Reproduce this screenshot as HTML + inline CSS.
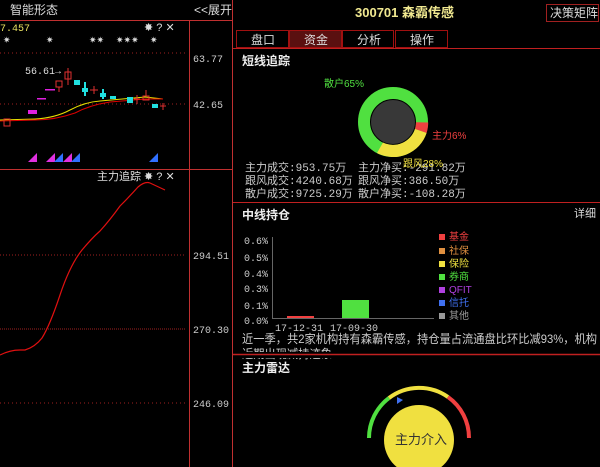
<!DOCTYPE html>
<html><head><meta charset="utf-8"><style>
body{margin:0;background:#000;width:600px;height:467px;overflow:hidden}
svg{display:block;font-family:"Liberation Sans","Noto Sans CJK SC",sans-serif}
</style></head><body>
<svg width="600" height="467" viewBox="0 0 600 467">
<rect width="600" height="467" fill="#000"/>
<text x="10" y="14" fill="#ddd" font-size="12">智能形态</text>
<text x="194" y="14" fill="#ddd" font-size="12">&lt;&lt;展开</text>
<line x1="0" y1="20.5" x2="233" y2="20.5" stroke="#c03030"/>
<line x1="232.5" y1="0" x2="232.5" y2="467" stroke="#c03030"/>
<line x1="189.5" y1="20" x2="189.5" y2="467" stroke="#c03030"/>
<line x1="0" y1="169.5" x2="233" y2="169.5" stroke="#c03030"/>
<text x="0" y="31" fill="#e8e060" font-size="10" font-family="Liberation Mono,monospace">7.457</text>
<text x="144" y="31" fill="#ddd" font-size="11">✸ ? ✕</text>
<g fill="#ddd" font-size="9"><text x="3" y="43">✷</text><text x="46" y="43">✷</text><text x="89" y="43">✷✷</text><text x="116" y="43">✷✷✷</text><text x="150" y="43">✷</text></g>
<line x1="0" y1="53" x2="185" y2="53" stroke="#a02020" stroke-dasharray="1 3"/>
<line x1="0" y1="104" x2="185" y2="104" stroke="#a02020" stroke-dasharray="1 3"/>
<text x="193" y="62" fill="#ccc" font-size="10" font-family="Liberation Mono,monospace">63.77</text>
<text x="193" y="108" fill="#ccc" font-size="10" font-family="Liberation Mono,monospace">42.65</text>
<text x="25" y="74" fill="#ddd" font-size="10" font-family="Liberation Mono,monospace">56.61→</text>
<path d="M0 120 L35 119 Q55 118 70 110 Q85 102 100 101 L145 97 L163 99" stroke="#e8e000" fill="none"/>
<path d="M0 121 L35 120 Q55 120 75 113 Q90 105 110 102 L145 99 L163 99" stroke="#d00" fill="none"/>
<g fill="none" stroke="#e03030"><rect x="4" y="119" width="6" height="7"/><rect x="56" y="81" width="6" height="6"/><rect x="65" y="72" width="6" height="7"/><line x1="68" y1="68" x2="68" y2="85"/><line x1="59" y1="87" x2="59" y2="92"/><line x1="90" y1="90" x2="98" y2="90"/><line x1="94" y1="86" x2="94" y2="94"/><line x1="134" y1="99" x2="140" y2="99"/><line x1="137" y1="95" x2="137" y2="104"/><rect x="143" y="96" width="6" height="4"/><line x1="146" y1="90" x2="146" y2="96"/><line x1="160" y1="106" x2="166" y2="106"/><line x1="163" y1="103" x2="163" y2="110"/></g>
<g fill="#20e0e0"><rect x="74" y="80" width="6" height="5"/><rect x="82" y="88" width="6" height="4"/><rect x="100" y="93" width="6" height="4"/><rect x="110" y="96" width="6" height="3"/><rect x="127" y="97" width="6" height="6"/><rect x="152" y="104" width="6" height="4"/><rect x="84" y="82" width="2" height="14"/><rect x="102" y="89" width="2" height="10"/></g>
<g fill="#e020e0"><rect x="28" y="110" width="9" height="4"/><rect x="45" y="89" width="10" height="1.5"/><rect x="37" y="98" width="9" height="1.5"/></g>
<g font-size="9"><text x="28" y="161" fill="#e030e0">◢</text><text x="46" y="161" fill="#e030e0">◢</text><text x="54" y="161" fill="#3070ff">◢</text><text x="63" y="161" fill="#e030e0">◢</text><text x="71" y="161" fill="#3070ff">◢</text><text x="149" y="161" fill="#3070ff">◢</text></g>
<text x="97" y="180" fill="#ddd" font-size="11">主力追踪</text>
<text x="144" y="180" fill="#ddd" font-size="11">✸ ? ✕</text>
<line x1="0" y1="255" x2="185" y2="255" stroke="#a02020" stroke-dasharray="1 2"/>
<line x1="0" y1="329" x2="185" y2="329" stroke="#a02020" stroke-dasharray="1 1"/>
<line x1="0" y1="403" x2="185" y2="403" stroke="#a02020" stroke-dasharray="1 3"/>
<text x="193" y="259" fill="#ccc" font-size="10" font-family="Liberation Mono,monospace">294.51</text>
<text x="193" y="333" fill="#ccc" font-size="10" font-family="Liberation Mono,monospace">270.30</text>
<text x="193" y="407" fill="#ccc" font-size="10" font-family="Liberation Mono,monospace">246.09</text>
<path d="M0 355 Q10 350 20 350 L25 350 Q35 347 42 338 Q50 325 60 295 Q70 265 82 250 Q92 238 100 231 Q110 220 120 206 Q130 196 138 187 Q145 181 150 183 L165 190" stroke="#e01010" fill="none" stroke-width="1.2"/>
<text x="355" y="17" fill="#f0e890" font-size="13" font-weight="bold">300701 森霸传感</text>
<rect x="546.5" y="4.5" width="52" height="17" fill="none" stroke="#a02020"/>
<text x="550" y="17" fill="#ddd" font-size="12">决策矩阵</text>
<g stroke="#a01010" fill="none"><rect x="236.5" y="30.5" width="52" height="17"/><rect x="289.5" y="30.5" width="52" height="17" fill="#5a1010"/><rect x="342.5" y="30.5" width="51" height="17"/><rect x="395.5" y="30.5" width="52" height="17"/></g>
<g fill="#ddd" font-size="12"><text x="251" y="44">盘口</text><text x="304" y="44">资金</text><text x="357" y="44">分析</text><text x="410" y="44">操作</text></g>
<line x1="233" y1="48.5" x2="600" y2="48.5" stroke="#c02020"/>
<text x="242" y="65" fill="#eee" font-size="12" font-weight="bold">短线追踪</text>
<text x="324" y="87" fill="#50e040" font-size="10">散户65%</text>
<circle cx="393" cy="122" r="29" fill="none" stroke="#50e040" stroke-width="12"/>
<path d="M428.2 122.5 A35 35 0 0 1 426.6 133 L415 129 A23 23 0 0 0 416 122.3Z" fill="#f04040"/>
<path d="M426.6 133 A35 35 0 0 1 377 153 L383 142.5 A23 23 0 0 0 415 129Z" fill="#f0e040"/>
<circle cx="393" cy="122" r="22" fill="#383838"/>
<text x="432" y="139" fill="#f04040" font-size="10">主力6%</text>
<g fill="#ccc" font-size="11" font-family="Liberation Mono,'Noto Sans CJK SC',monospace"><text x="245" y="171">主力成交:953.75万</text><text x="358" y="171">主力净买:-291.82万</text><text x="245" y="184">跟风成交:4240.68万</text><text x="358" y="184">跟风净买:386.50万</text><text x="245" y="197">散户成交:9725.29万</text><text x="358" y="197">散户净买:-108.28万</text></g>
<text x="403" y="167" fill="#f0e040" font-size="10">跟风28%</text>
<line x1="233" y1="202.5" x2="600" y2="202.5" stroke="#c02020"/>
<text x="242" y="219" fill="#eee" font-size="12" font-weight="bold">中线持仓</text>
<text x="574" y="217" fill="#ddd" font-size="11">详细</text>
<g fill="#ccc" font-size="10" font-family="Liberation Mono,monospace"><text x="244" y="244">0.6%</text><text x="244" y="261">0.5%</text><text x="244" y="277">0.4%</text><text x="244" y="292">0.3%</text><text x="244" y="309">0.1%</text><text x="244" y="324">0.0%</text><text x="275" y="331">17-12-31</text><text x="330" y="331">17-09-30</text></g>
<line x1="272.5" y1="237" x2="272.5" y2="319" stroke="#666"/>
<line x1="272" y1="318.5" x2="434" y2="318.5" stroke="#666"/>
<rect x="287" y="316" width="27" height="2" fill="#f04040"/>
<rect x="342" y="300" width="27" height="18" fill="#50e040"/>
<g font-size="10"><rect x="439" y="234" width="6" height="6" fill="#f04040"/><text x="449" y="240" fill="#f04040">基金</text>
<rect x="439" y="248" width="6" height="6" fill="#e09040"/><text x="449" y="254" fill="#e09040">社保</text>
<rect x="439" y="261" width="6" height="6" fill="#f0e040"/><text x="449" y="267" fill="#f0e040">保险</text>
<rect x="439" y="274" width="6" height="6" fill="#50e040"/><text x="449" y="280" fill="#50e040">券商</text>
<rect x="439" y="287" width="6" height="6" fill="#b040e0"/><text x="449" y="293" fill="#b040e0">QFIT</text>
<rect x="439" y="300" width="6" height="6" fill="#4070f0"/><text x="449" y="306" fill="#4070f0">信托</text>
<rect x="439" y="313" width="6" height="6" fill="#999"/><text x="449" y="319" fill="#999">其他</text></g>
<text x="242" y="343" fill="#ccc" font-size="12" textLength="355" lengthAdjust="spacingAndGlyphs">近一季，共2家机构持有森霸传感，持仓量占流通盘比环比减93%，机构</text>
<text x="242" y="358" fill="#ccc" font-size="12" textLength="90" lengthAdjust="spacingAndGlyphs">近期出现减持迹象</text>
<rect x="233" y="352" width="367" height="6" fill="#000"/>
<line x1="233" y1="354.5" x2="600" y2="354.5" stroke="#c02020" stroke-width="1.5"/>
<text x="242" y="372" fill="#eee" font-size="12" font-weight="bold">主力雷达</text>
<path d="M369 438 A50 50 0 0 1 389 398" stroke="#50e040" stroke-width="4" fill="none"/>
<path d="M389 398 A50 50 0 0 1 448 397" stroke="#f0e040" stroke-width="4" fill="none"/>
<path d="M448 397 A50 50 0 0 1 469 438" stroke="#f04040" stroke-width="4" fill="none"/>
<path d="M397 397 L397 404 L403 400Z" fill="#4070f0"/>
<circle cx="419" cy="440" r="35" fill="#f0e040"/>
<text x="395" y="444" fill="#333" font-size="13">主力介入</text>
</svg>
</body></html>
